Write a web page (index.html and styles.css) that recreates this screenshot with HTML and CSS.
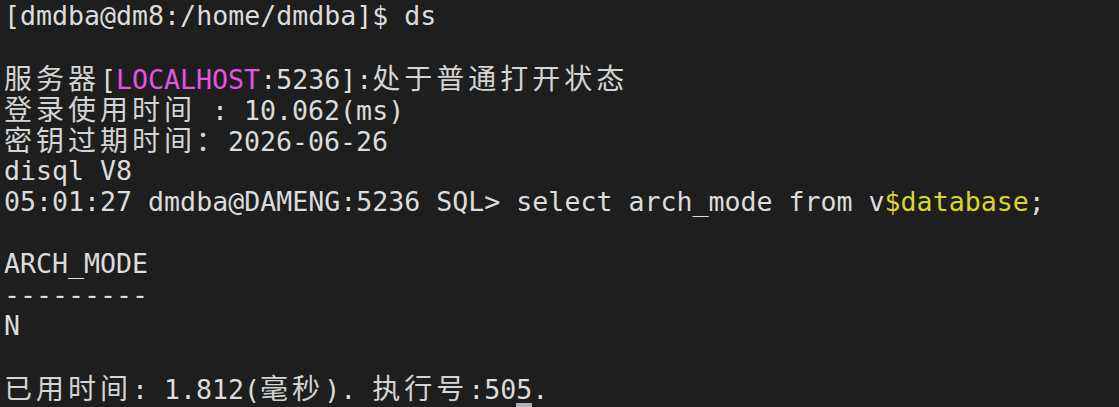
FILE: index.html
```html
<!DOCTYPE html>
<html lang="zh">
<head>
<meta charset="utf-8">
<title>Terminal</title>
<link rel="stylesheet" href="styles.css">
</head>
<body>
<div class="term">
<div class="line">[dmdba@dm8:/home/dmdba]$ ds</div>
<div class="line"></div>
<div class="line"><span class="w">服务器</span>[<span class="mag">LOCALHOST</span>:5236]:<span class="w">处于普通打开状态</span></div>
<div class="line"><span class="w">登录使用时间</span> : 10.062(ms)</div>
<div class="line"><span class="w">密钥过期时间：</span>2026-06-26</div>
<div class="line">disql V8</div>
<div class="line">05:01:27 dmdba@DAMENG:5236 SQL&gt; select arch_mode from v<span class="yel">$database</span>;</div>
<div class="line"></div>
<div class="line">ARCH_MODE</div>
<div class="line">---------</div>
<div class="line">N</div>
<div class="line"></div>
<div class="line"><span class="w">已用时间</span>: 1.812(<span class="w">毫秒</span>). <span class="w">执行号</span>:505.</div>
<div class="cursor-row"><span class="cursor"></span></div>
</div>
</body>
</html>
```
FILE: styles.css
```css
html, body {
  margin: 0;
  padding: 0;
  background: #1e1e1e;
  overflow: hidden;
}
.term {
  padding: 0 0 0 4px;
  font-family: "DejaVu Sans Mono", "Noto Sans CJK SC", monospace;
  font-size: 26.6px;
  color: #dcdcdc;
}
.line {
  height: 31px;
  line-height: 31px;
  white-space: pre;
}
.w {
  font-family: "Noto Sans CJK SC", sans-serif;
  font-size: 28px;
  letter-spacing: 4px;
  line-height: 31px;
  color: #d4d4d4;
}
.mag {
  color: #e254e2;
}
.yel {
  color: #d8d82a;
}
.cursor-row {
  height: 4px;
  padding-left: 512px;
}
.cursor {
  display: block;
  width: 16px;
  height: 4px;
  background: #b0b0b4;
}
```
